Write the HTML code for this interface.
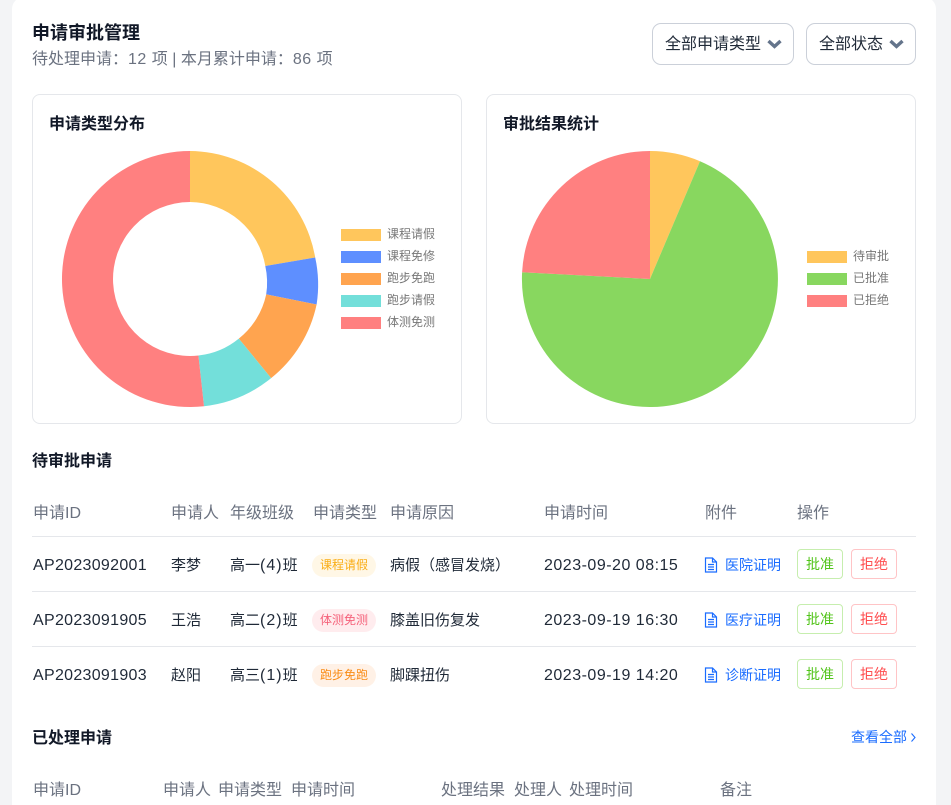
<!DOCTYPE html>
<html lang="zh-CN"><head><meta charset="utf-8"><title>申请审批管理</title>
<style>
html,body{margin:0;padding:0;width:951px;height:805px;overflow:hidden;background:#f3f4f6}
body{position:relative;font-family:"Liberation Sans","Noto Sans CJK SC",sans-serif;color:#1f2937}
.card{position:absolute;left:12px;top:-3px;width:924px;height:830px;background:#fff;border-radius:12px}
.t{position:absolute;white-space:nowrap;line-height:24px;height:24px}
.b{font-weight:700;color:#111827}
.h{font-size:16px;color:#6b7280}
.r{font-size:15px;color:#1f2937}
.id{font-size:16px;letter-spacing:.3px}
.dt{font-size:16px;letter-spacing:.5px}
.p{font-size:16px;letter-spacing:1px}
.dd{position:absolute;top:23px;height:40px;border:1px solid #cbd0d9;border-radius:9px;background:#fff;box-sizing:content-box}
.cc{position:absolute;top:94px;width:428px;height:328px;border:1px solid #e5e7eb;border-radius:8px;background:#fff}
.ln{position:absolute;left:32px;width:884px;height:1px;background:#e5e7eb}
.bd{position:absolute;left:312px;width:64px;height:23px;line-height:23px;border-radius:12px;font-size:12px;text-align:center}
.a,.x{position:absolute;width:44px;height:28px;line-height:28px;border-radius:4px;font-size:14px;text-align:center;background:#fff}
.a{left:797px;border:1px solid #c6eeae;color:#52c41a}
.x{left:851px;border:1px solid #ffc4c6;color:#ff4d4f}
.lk{font-size:14px;color:#1a6cff}
svg{position:absolute}
.ic{left:704px;width:14px;height:16px}
</style></head><body>
<div class="card"></div>

<div class="t b" style="left:32px;top:21px;font-size:18px">申请审批管理</div>
<div class="t" style="left:32px;top:48px;font-size:16px;color:#6b7280">待处理申请：<span style="letter-spacing:.5px">12 </span>项 | 本月累计申请：<span style="letter-spacing:.5px">86 </span>项</div>

<div class="dd" style="left:652px;width:140px"></div>
<div class="t" style="left:665px;top:33px;font-size:16px;color:#1f2937">全部申请类型</div>
<svg style="left:766px;top:38px" width="17" height="12" viewBox="0 0 17 12"><path d="M2.500 3l6 5.500 6-5.500" fill="none" stroke="#64748b" stroke-width="3.400"/></svg>
<div class="dd" style="left:806px;width:108px"></div>
<div class="t" style="left:819px;top:33px;font-size:16px;color:#1f2937">全部状态</div>
<svg style="left:888px;top:38px" width="17" height="12" viewBox="0 0 17 12"><path d="M2.500 3l6 5.500 6-5.500" fill="none" stroke="#64748b" stroke-width="3.400"/></svg>

<div class="cc" style="left:32px"></div>
<div class="cc" style="left:486px"></div>
<div class="t b" style="left:49px;top:113px;font-size:16px">申请类型分布</div>
<div class="t b" style="left:503px;top:113px;font-size:16px">审批结果统计</div>

<svg style="left:0;top:0" width="951" height="430" viewBox="0 0 951 430">
<g>
<path d="M190 151A128 128 0 0 1 315.2 257.5L265.3 266A77 77 0 0 0 190 202Z" fill="#ffc65c"/>
<path d="M315.2 257.5A128 128 0 0 1 316.6 304.5L266.2 294.4A77 77 0 0 0 265.3 266Z" fill="#5e8fff"/>
<path d="M316.6 304.500A128 128 0 0 1 271.12 378.1L238.8 338.66A77 77 0 0 0 266.2 294.4Z" fill="#ffa44f"/>
<path d="M271.12 378.1A128 128 0 0 1 204 406.23L198.42 355.54A77 77 0 0 0 238.8 338.66Z" fill="#73dfda"/>
<path d="M204 406.23A128 128 0 1 1 190 151L190 202A77 77 0 1 0 198.42 355.54Z" fill="#ff8080"/>
</g>
<g>
<path d="M650 279L650 151A128 128 0 0 1 700 161.2Z" fill="#ffc65c"/>
<path d="M650 279L700 161.2A128 128 0 1 1 522.1 272.3Z" fill="#88d75f"/>
<path d="M650 279L522.1 272.3A128 128 0 0 1 650 151Z" fill="#ff8080"/>
</g>
<g>
<rect x="341" y="229" width="40" height="12" fill="#ffc65c"/>
<rect x="341" y="251" width="40" height="12" fill="#5e8fff"/>
<rect x="341" y="273" width="40" height="12" fill="#ffa44f"/>
<rect x="341" y="295" width="40" height="12" fill="#73dfda"/>
<rect x="341" y="317" width="40" height="12" fill="#ff8080"/>
<rect x="807" y="251" width="40" height="12" fill="#ffc65c"/>
<rect x="807" y="273" width="40" height="12" fill="#88d75f"/>
<rect x="807" y="295" width="40" height="12" fill="#ff8080"/>
</g>
<g font-size="12" fill="#777" font-family="'Liberation Sans','Noto Sans CJK SC',sans-serif">
<text x="387" y="238">课程请假</text>
<text x="387" y="260">课程免修</text>
<text x="387" y="282">跑步免跑</text>
<text x="387" y="304">跑步请假</text>
<text x="387" y="326">体测免测</text>
<text x="853" y="260">待审批</text>
<text x="853" y="282">已批准</text>
<text x="853" y="304">已拒绝</text>
</g>
</svg>

<div class="t b" style="left:32px;top:450px;font-size:16px">待审批申请</div>

<div class="t h" style="left:33px;top:502px">申请ID</div>
<div class="t h" style="left:171px;top:502px">申请人</div>
<div class="t h" style="left:230px;top:502px">年级班级</div>
<div class="t h" style="left:313px;top:502px">申请类型</div>
<div class="t h" style="left:390px;top:502px">申请原因</div>
<div class="t h" style="left:544px;top:502px">申请时间</div>
<div class="t h" style="left:705px;top:502px">附件</div>
<div class="t h" style="left:797px;top:502px">操作</div>
<div class="ln" style="top:536px"></div>

<div class="t r id" style="left:33px;top:554px">AP2023092001</div>
<div class="t r" style="left:171px;top:554px">李梦</div>
<div class="t r" style="left:230px;top:554px">高一<span class="p">(4)</span>班</div>
<div class="bd" style="top:554px;background:#fff7e6;color:#faad14">课程请假</div>
<div class="t r" style="left:390px;top:554px">病假（感冒发烧）</div>
<div class="t r dt" style="left:544px;top:554px">2023-09-20 08:15</div>
<svg class="ic" style="top:557px" viewBox="0 0 14 16"><path d="M1.500 1h7l4 4v10h-11zM8.500 1v4h4M4 7.500h6M4 10h6M4 12.500h6" fill="none" stroke="#1a6cff" stroke-width="1.200"/></svg>
<div class="t lk" style="left:725px;top:553px">医院证明</div>
<div class="a" style="top:549px">批准</div>
<div class="x" style="top:549px">拒绝</div>
<div class="ln" style="top:591px"></div>

<div class="t r id" style="left:33px;top:609px">AP2023091905</div>
<div class="t r" style="left:171px;top:609px">王浩</div>
<div class="t r" style="left:230px;top:609px">高二<span class="p">(2)</span>班</div>
<div class="bd" style="top:609px;background:#ffecee;color:#f5617a">体测免测</div>
<div class="t r" style="left:390px;top:609px">膝盖旧伤复发</div>
<div class="t r dt" style="left:544px;top:609px">2023-09-19 16:30</div>
<svg class="ic" style="top:612px" viewBox="0 0 14 16"><path d="M1.500 1h7l4 4v10h-11zM8.500 1v4h4M4 7.500h6M4 10h6M4 12.500h6" fill="none" stroke="#1a6cff" stroke-width="1.200"/></svg>
<div class="t lk" style="left:725px;top:608px">医疗证明</div>
<div class="a" style="top:604px">批准</div>
<div class="x" style="top:604px">拒绝</div>
<div class="ln" style="top:646px"></div>

<div class="t r id" style="left:33px;top:664px">AP2023091903</div>
<div class="t r" style="left:171px;top:664px">赵阳</div>
<div class="t r" style="left:230px;top:664px">高三<span class="p">(1)</span>班</div>
<div class="bd" style="top:664px;background:#fff1e6;color:#fa8c16">跑步免跑</div>
<div class="t r" style="left:390px;top:664px">脚踝扭伤</div>
<div class="t r dt" style="left:544px;top:664px">2023-09-19 14:20</div>
<svg class="ic" style="top:667px" viewBox="0 0 14 16"><path d="M1.500 1h7l4 4v10h-11zM8.500 1v4h4M4 7.500h6M4 10h6M4 12.500h6" fill="none" stroke="#1a6cff" stroke-width="1.200"/></svg>
<div class="t lk" style="left:725px;top:663px">诊断证明</div>
<div class="a" style="top:659px">批准</div>
<div class="x" style="top:659px">拒绝</div>

<div class="t b" style="left:32px;top:727px;font-size:16px">已处理申请</div>
<div class="t lk" style="left:851px;top:725px">查看全部</div>
<svg style="left:909px;top:732px" width="9" height="11" viewBox="0 0 9 11"><path d="M2.500 1.500l3.500 4-3.500 4" fill="none" stroke="#1a6cff" stroke-width="1.100"/></svg>

<div class="t h" style="left:33px;top:779px">申请ID</div>
<div class="t h" style="left:163px;top:779px">申请人</div>
<div class="t h" style="left:218px;top:779px">申请类型</div>
<div class="t h" style="left:291px;top:779px">申请时间</div>
<div class="t h" style="left:441px;top:779px">处理结果</div>
<div class="t h" style="left:514px;top:779px">处理人</div>
<div class="t h" style="left:569px;top:779px">处理时间</div>
<div class="t h" style="left:720px;top:779px">备注</div>
</body></html>
